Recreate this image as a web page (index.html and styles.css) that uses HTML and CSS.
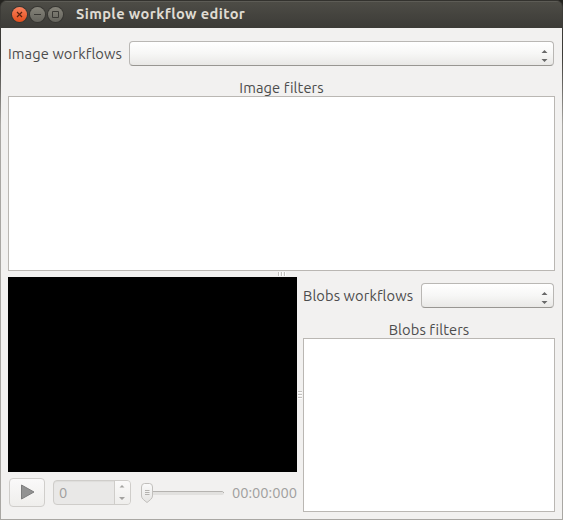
FILE: index.html
```html
<!DOCTYPE html>
<html lang="en">
<head>
<meta charset="utf-8">
<title>Simple workflow editor</title>
<link rel="stylesheet" href="styles.css">
</head>
<body>
<div class="window">
  <header class="titlebar">
    <div class="buttons">
      <svg class="wbtn close" viewBox="0 0 15 15"><path d="M5 5l5 5M10 5l-5 5"/></svg>
      <svg class="wbtn" viewBox="0 0 15 15"><path d="M4 7.500h7"/></svg>
      <svg class="wbtn" viewBox="0 0 15 15"><path d="M4.500 4.500h6v6h-6z"/></svg>
    </div>
    <h1 class="title">Simple workflow editor</h1>
  </header>
  <main class="content">
    <div class="row row-image">
      <span class="label label-image">Image workflows</span>
      <div class="combo"><svg class="arrows" viewBox="0 0 7 13"><path d="M.5 4L3.5 1l3 3zM.5 10l3 3 3-3z"/></svg></div>
    </div>
    <div class="heading"><span>Image filters</span></div>
    <div class="list list-image"></div>
    <div class="split-h"><i></i><i></i><i></i></div>
    <div class="lower">
      <section class="player">
        <div class="video"></div>
        <div class="controls">
          <div class="play"><svg viewBox="0 0 16 16"><path d="M2.500 1L15 8 2.500 15z"/></svg></div>
          <div class="spin">
            <span class="value">0</span>
            <div class="steps"><svg viewBox="0 0 16 25"><path d="M6.500 8.500L9 6l2.500 2.500zM6 18h6l-3 3z"/></svg></div>
          </div>
          <div class="slider">
            <svg viewBox="0 0 84 22">
              <defs><linearGradient id="knob" x2="0" y2="1"><stop stop-color="#fafafa"/><stop offset="1" stop-color="#e5e4e2"/></linearGradient></defs>
              <rect x="7" y="8" width="76" height="4" rx="2" fill="#e2e1df"/>
              <path d="M8 8.500h73.500l1.500 1.500" fill="none" stroke="#b5b3b0"/>
              <path d="M3.500 .5h5q3 0 3 3.500v9c0 2.500-3 4.500-5.500 6.500-2.500-2-5.500-4-5.500-6.500V4q0-3.500 3-3.500z" fill="url(#knob)" stroke="#c1bfbc"/>
              <path d="M4 7.500h4.500M4 9.500h4.500M4 11.500h4.500" stroke="#b4b2af"/>
            </svg>
          </div>
          <span class="time">00:00:000</span>
        </div>
      </section>
      <div class="split-v"><i></i><i></i><i></i></div>
      <section class="blobs">
        <div class="row">
          <span class="label label-blobs">Blobs workflows</span>
          <div class="combo"><svg class="arrows" viewBox="0 0 7 13"><path d="M.5 4L3.5 1l3 3zM.5 10l3 3 3-3z"/></svg></div>
        </div>
        <div class="heading"><span>Blobs filters</span></div>
        <div class="list list-blobs"></div>
      </section>
    </div>
  </main>
</div>
</body>
</html>
```

FILE: styles.css
```css
* { box-sizing: border-box; }
body {
  margin: 0;
  background: #24231f;
  font-family: Ubuntu, "Noto Sans", sans-serif;
  font-size: 14.67px;
  color: #4c4c4c;
}
svg { display: block; }
.window {
  width: 563px;
  height: 520px;
  padding: 0 1px 1px;
  overflow: hidden;
  border-radius: 7px 7px 0 0;
  background: linear-gradient(#3c3b37 0, #3c3b37 55px, #a9a7a3 125px);
}
.titlebar {
  display: flex;
  align-items: center;
  height: 28px;
  padding-left: 11px;
  border-top: 1px solid #33322e;
  border-radius: 6px 6px 0 0;
  background: linear-gradient(#5d5c56 0, #5d5c56 1px, #4d4c46 1px, #3c3b37);
}
.buttons { display: flex; gap: 3px; }
.wbtn {
  width: 15px;
  height: 15px;
  border-radius: 50%;
  background: linear-gradient(#858379, #65645d);
  box-shadow: 0 0 0 1px #373632;
  fill: none;
  stroke: #3a3935;
}
.wbtn.close { background: linear-gradient(#f9815d, #e34e1c); stroke: #59230f; stroke-width: 1.2; }
.title {
  margin: 0 0 2px 13px;
  font-size: 14.67px;
  line-height: 25px;
  letter-spacing: .38px;
  color: #dfdbd2;
  white-space: nowrap;
}
.content {
  height: 491px;
  padding: 13px 7px 0;
  background: #f2f1f0;
}
.row { display: flex; align-items: center; height: 26px; padding-right: 1px; }
.label { flex: none; margin-bottom: 2px; letter-spacing: .1px; white-space: nowrap; }
.label-image { width: 121px; }
.label-blobs { width: 118px; }
.combo {
  display: flex;
  flex: 1;
  justify-content: flex-end;
  align-items: center;
  height: 25px;
  margin-bottom: 1px;
  padding: 3px 5px 0 0;
  border: 1px solid #b9b7b4;
  border-bottom-color: #989692;
  border-radius: 4px;
  background: linear-gradient(#fff, #f7f7f6 50%, #e9e8e6);
}
.arrows { width: 7px; height: 13px; fill: #696969; }
.heading { display: flex; justify-content: center; height: 29px; padding-top: 12px; letter-spacing: .1px; white-space: nowrap; line-height: 18px; }
.list { border: 1px solid #bab7b3; background: #fff; }
.list-image { height: 175px; }
.split-h { display: flex; justify-content: center; align-items: center; gap: 2px; height: 6px; }
.split-h i { width: 1px; height: 4px; background: #c4c2bf; box-shadow: 1px 0 #fff; }
.lower { display: flex; height: 235px; }
.player { width: 289px; }
.video { height: 195px; background: #000; }
.controls { display: flex; align-items: flex-start; padding: 6px 0 0 1px; color: #a09f9e; }
.play {
  display: flex;
  justify-content: center;
  align-items: center;
  width: 36px;
  height: 29px;
  border: 1px solid #d0cecb;
  border-radius: 4px;
  background: linear-gradient(#faf9f9, #efeeec);
}
.play svg { width: 16px; height: 16px; margin-bottom: 1px; fill: #929292; stroke: #7d7d7d; stroke-linejoin: round; }
.spin {
  display: flex;
  width: 78px;
  height: 25px;
  margin: 2px 0 0 8px;
  border: 1px solid #cfcdca;
  border-radius: 4px;
  background: #e9e8e7;
  box-shadow: inset 0 1px 1px #dedddb;
}
.value { flex: 1; padding-left: 5px; line-height: 24px; }
.steps { width: 16px; height: 23px; border-left: 1px solid #cfcdca; border-radius: 0 3px 3px 0; background: linear-gradient(#faf9f9, #efeeec); }
.steps svg { width: 16px; height: 25px; margin: -2px 0 0 -2px; fill: #a3a2a0; }
.slider { width: 84px; margin: 5px 0 0 10px; }
.slider svg { width: 84px; height: 22px; }
.time { margin: 5px 0 0 7px; line-height: 20px; }
.split-v { display: flex; flex-direction: column; justify-content: center; align-items: center; gap: 2px; width: 6px; }
.split-v i { width: 4px; height: 1px; background: #c4c2bf; box-shadow: 0 1px #fff; }
.blobs { width: 252px; padding-top: 6px; }
.list-blobs { height: 174px; }
```
